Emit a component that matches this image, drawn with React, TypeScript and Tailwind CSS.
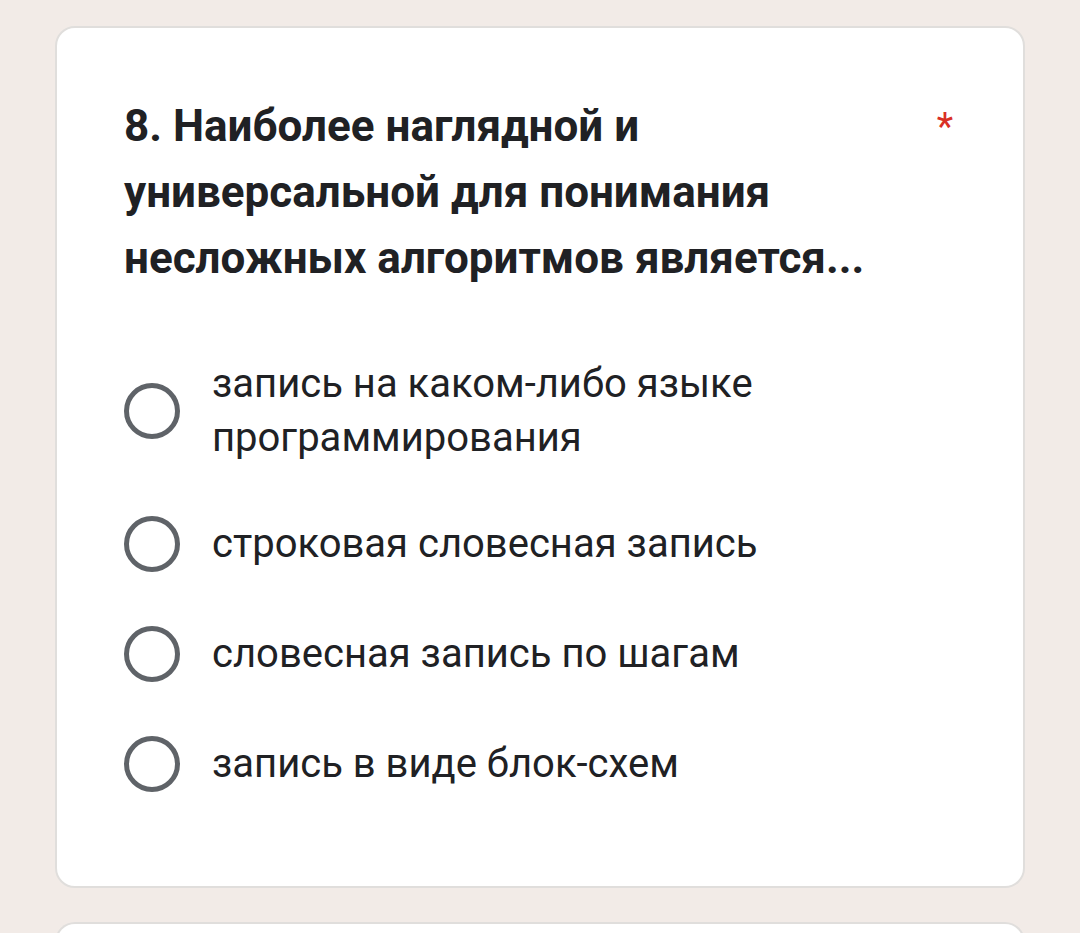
const options = [
  "запись на каком-либо языке программирования",
  "строковая словесная запись",
  "словесная запись по шагам",
  "запись в виде блок-схем",
];

function Radio() {
  return (
    <div className="h-[56px] w-[56px] shrink-0 rounded-full border-[5px] border-[#5f6368]" />
  );
}

export default function App() {
  return (
    <div
      className="min-h-[933px] overflow-hidden bg-[#f2ebe7] px-[55px] pt-[26px]"
      style={{ fontFamily: "Roboto, 'Noto Sans', sans-serif" }}
    >
      <div className="rounded-[20px] border-2 border-[#e0dedc] bg-white pb-[91px] pl-[67px] pr-[70px] pt-[65px]">
        <div className="flex items-start justify-between gap-6">
          <h1 className="max-w-[790px] text-[44px] font-bold leading-[66px] text-[#202124]">
            8. Наиболее наглядной и универсальной для понимания несложных алгоритмов является...
          </h1>
          <span className="mt-[14px] text-[38px] leading-[40px] text-[#d93025]">*</span>
        </div>

        <div className="mt-[66px] flex flex-col gap-[48px]">
          {options.map((o) => (
            <label key={o} className="flex min-h-[62px] items-center gap-[32px]">
              <Radio />
              <span className="max-w-[640px] text-[40px] leading-[54px] text-[#202124]">
                {o}
              </span>
            </label>
          ))}
        </div>
      </div>

      <div className="mt-[34px] h-[40px] rounded-t-[20px] border-2 border-b-0 border-[#e0dedc] bg-white" />
    </div>
  );
}
